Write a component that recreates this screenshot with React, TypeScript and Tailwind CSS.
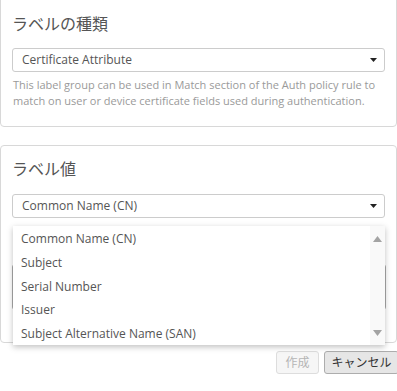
import React from "react";

const Caret = () => (
  <svg width="7" height="4" viewBox="0 0 7 4" className="absolute right-[7px] top-[9px]">
    <path d="M0 0 L7 0 L3.5 4 Z" fill="#222" />
  </svg>
);

const Select = ({ value }: { value: string }) => (
  <div className="relative h-[24px] w-[373px] rounded-[3px] border border-[#cccccc] bg-white pl-[9px] text-[12px] leading-[22px] text-[#555555]">
    {value}
    <Caret />
  </div>
);

const items = [
  "Common Name (CN)",
  "Subject",
  "Serial Number",
  "Issuer",
  "Subject Alternative Name (SAN)",
];

export default function App() {
  return (
    <div
      className="relative h-[391px] w-[397px] overflow-hidden bg-white"
      style={{ fontFamily: '"Open Sans", "Noto Sans CJK JP", sans-serif' }}
    >
      {/* Panel 1 */}
      <div className="mt-[-5px] w-[397px] rounded-[4px] border border-[#d8d8d8] px-[11px] pb-[17px] pt-[16px]">
        <div className="h-[24px] text-[16px] leading-[24px] text-[#555555]">ラベルの種類</div>
        <div className="mt-[12px]">
          <Select value="Certificate Attribute" />
        </div>
        <div className="mt-[5px] pl-[1px] text-[11px] leading-[16px] text-[#9a9a9a]">
          This label group can be used in Match section of the Auth policy rule to match on user or device certificate fields used during authentication.
        </div>
      </div>

      {/* Panel 2 */}
      <div className="mt-[18px] w-[397px] rounded-[4px] border border-[#d8d8d8] px-[11px] pb-[32px] pt-[11px]">
        <div className="h-[24px] text-[16px] leading-[24px] text-[#555555]">ラベル値</div>
        <div className="mt-[13px]">
          <Select value="Common Name (CN)" />
        </div>
        <div className="mt-[46px] h-[46px] w-[374px] rounded-[3px] border border-[#aaaaaa]" />
      </div>

      {/* Buttons */}
      <div className="mr-[-2px] mt-[8px] flex justify-end gap-[5px]">
        <div className="flex h-[23px] w-[43px] items-center justify-center rounded-[3px] border border-[#dddddd] bg-[#f6f6f6] text-[12px] text-[#b5b5b5]">
          作成
        </div>
        <div className="flex h-[23px] w-[75px] items-center justify-center rounded-[3px] border border-[#adadad] bg-[#e6e6e6] text-[12px] text-[#333333]">
          キャンセル
        </div>
      </div>

      {/* Dropdown list overlay */}
      <div className="absolute left-[13px] top-[226px] flex h-[119px] w-[372px] bg-white shadow-[0_2px_6px_rgba(0,0,0,0.25)]">
        <div className="flex-1 pt-[1px]">
          {items.map((it) => (
            <div key={it} className="h-[23.75px] pl-[8px] text-[12px] leading-[24px] text-[#555555]">
              {it}
            </div>
          ))}
        </div>
        <div className="relative w-[15px] bg-[#f9f9f9]">
          <svg width="9" height="6" viewBox="0 0 9 6" className="absolute left-[3px] top-[10px]">
            <path d="M0 6 L9 6 L4.5 0 Z" fill="#a3a3a3" />
          </svg>
          <svg width="9" height="6" viewBox="0 0 9 6" className="absolute bottom-[9px] left-[3px]">
            <path d="M0 0 L9 0 L4.5 6 Z" fill="#a3a3a3" />
          </svg>
        </div>
      </div>
    </div>
  );
}
